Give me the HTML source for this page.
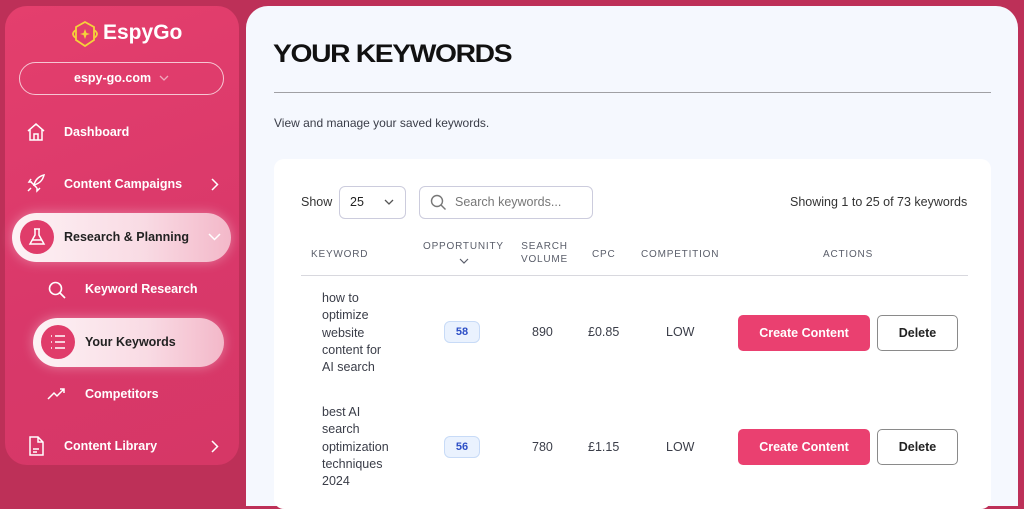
<!DOCTYPE html>
<html><head><meta charset="utf-8"><style>
*{box-sizing:border-box;margin:0;padding:0}
body{width:1024px;height:488px;overflow:hidden;background:#bd3058;font-family:"Liberation Sans",sans-serif;position:relative}
.a{position:absolute}
#side{left:5px;top:6px;width:234px;height:459px;border-radius:22px;background:linear-gradient(160deg,#e43f6d,#d9386a 60%,#d63766)}
.nav{color:#fff;font-size:12.5px;font-weight:bold;white-space:nowrap}
.pill{background:linear-gradient(90deg,#fdf2f5,#f9dbe4 60%,#f3b8c9);border-radius:25px;box-shadow:0 0 12px rgba(255,255,255,.35)}
.circ{border-radius:50%;background:#e03c6a;}
#main{left:246px;top:6px;width:772px;height:500px;border-radius:22px 22px 0 0;background:#f5f8fe}
#card{left:274px;top:159px;width:717px;height:350px;background:#fff;border-radius:10px}
.th{font-size:10px;color:#5a5e6a;letter-spacing:.8px;text-align:center;line-height:13px}
.td{font-size:12.5px;color:#3a3d48}
.badge{width:36px;height:22px;border:1px solid #c8dbf7;background:#eaf2fe;border-radius:6px;color:#2d4fc6;font-size:11px;font-weight:bold;text-align:center;line-height:20px}
.cc{width:132px;height:36px;background:#ea4070;border-radius:5px;color:#fff;font-size:12.5px;font-weight:bold;text-align:center;line-height:36px}
.del{width:81px;height:36px;border:1px solid #8a8a8a;background:#fff;border-radius:5px;color:#222;font-size:12.5px;font-weight:bold;text-align:center;line-height:34px}
</style></head><body>
<div id="side" class="a"></div>
<svg class="a" style="left:70px;top:20px" width="30" height="28" viewBox="0 0 30 28" fill="none" stroke="#f5d23a" stroke-width="1.8"><path d="M15 2 L24 7 L24 20 L15 26 L6 20 L6 7 Z"/><path d="M6 10 Q0 14 6 18 M24 10 Q30 14 24 18"/><path d="M15 9 L16.5 13 L20 14 L16.5 15 L15 19 L13.5 15 L10 14 L13.5 13 Z" fill="#f5d23a" stroke="none"/></svg>
<div class="a" style="left:103px;top:21px;color:#fff;font-size:21px;font-weight:bold">EspyGo</div>
<div class="a" style="left:19px;top:62px;width:205px;height:33px;border:1.5px solid #f6c6d3;border-radius:17px"></div>
<div class="a nav" style="left:74px;top:71px">espy-go.com</div>
<svg class="a" style="left:159px;top:75px" width="10" height="7" viewBox="0 0 10 7" fill="none" stroke="#f0a9bd" stroke-width="1.3"><path d="M1 1 L5 5 L9 1"/></svg>
<svg class="a" style="left:26px;top:122px" width="20" height="20" viewBox="0 0 20 20" fill="none" stroke="#fff" stroke-width="1.5"><path d="M2 9 L10 2 L18 9 M4 7.5 V18 H16 V7.5 M8 18 V12 H12 V18"/></svg>
<div class="a nav" style="left:64px;top:125px">Dashboard</div>
<svg class="a" style="left:26px;top:173px" width="20" height="20" viewBox="0 0 20 20" fill="none" stroke="#fff" stroke-width="1.5"><path d="M8 12 Q10 4 18 2 Q16 10 8 12 Z M8 12 L5 9 M8 12 L11 15 M5 15 L2 18 M6 9 L3 9 L5 6 M11 15 L11 18 L14 15"/></svg>
<div class="a nav" style="left:64px;top:177px">Content Campaigns</div>
<svg class="a" style="left:211px;top:178px" width="8" height="13" viewBox="0 0 8 13" fill="none" stroke="#fff" stroke-width="1.5"><path d="M1 1 L6.5 6.5 L1 12"/></svg>
<div class="a pill" style="left:12px;top:213px;width:219px;height:49px"></div>
<div class="a circ" style="left:20px;top:220px;width:34px;height:34px"></div>
<svg class="a" style="left:27px;top:227px" width="20" height="20" viewBox="0 0 20 20" fill="none" stroke="#fff" stroke-width="1.5"><path d="M7 2 H13 M8 2 V8 L3 17 H17 L12 8 V2 M5 13 H15"/></svg>
<div class="a nav" style="left:64px;top:230px;color:#222">Research &amp; Planning</div>
<svg class="a" style="left:208px;top:233px" width="13" height="8" viewBox="0 0 13 8" fill="none" stroke="#fff" stroke-width="1.5"><path d="M1 1 L6.5 6.5 L12 1"/></svg>
<svg class="a" style="left:47px;top:280px" width="20" height="20" viewBox="0 0 20 20" fill="none" stroke="#fff" stroke-width="1.6"><circle cx="8.5" cy="8.5" r="6"/><path d="M13 13 L18 18"/></svg>
<div class="a nav" style="left:85px;top:282px">Keyword Research</div>
<div class="a pill" style="left:33px;top:318px;width:191px;height:49px"></div>
<div class="a circ" style="left:41px;top:325px;width:34px;height:34px"></div>
<svg class="a" style="left:48px;top:333px" width="20" height="18" viewBox="0 0 20 18" fill="none" stroke="#fff" stroke-width="1.5"><path d="M3 3 h1 M3 9 h1 M3 15 h1 M7 3 H17 M7 9 H17 M7 15 H17"/></svg>
<div class="a nav" style="left:85px;top:335px;color:#222">Your Keywords</div>
<svg class="a" style="left:47px;top:386px" width="20" height="16" viewBox="0 0 20 16" fill="none" stroke="#fff" stroke-width="1.5"><path d="M1 13 L7 7 L10 10 L17 3 M13 3 H17 V7"/></svg>
<div class="a nav" style="left:85px;top:387px">Competitors</div>
<svg class="a" style="left:27px;top:436px" width="18" height="20" viewBox="0 0 18 20" fill="none" stroke="#fff" stroke-width="1.5"><path d="M3 1 H11 L16 6 V19 H3 Z M11 1 V6 H16 M6 13 H12 M6 16 H10"/></svg>
<div class="a nav" style="left:64px;top:439px">Content Library</div>
<svg class="a" style="left:211px;top:440px" width="8" height="13" viewBox="0 0 8 13" fill="none" stroke="#fff" stroke-width="1.5"><path d="M1 1 L6.5 6.5 L1 12"/></svg>

<div id="main" class="a"></div>
<div class="a" style="left:273px;top:40px;font-size:25px;font-weight:900;color:#111;letter-spacing:-1.2px;transform:scaleX(1.13);transform-origin:left;white-space:nowrap">YOUR KEYWORDS</div>
<div class="a" style="left:274px;top:92px;width:717px;height:1px;background:#a0a0a4"></div>
<div class="a" style="left:274px;top:116px;font-size:12px;color:#3a3d48">View and manage your saved keywords.</div>
<div id="card" class="a"></div>
<div class="a td" style="left:301px;top:195px;color:#333">Show</div>
<div class="a" style="left:339px;top:186px;width:67px;height:33px;border:1px solid #ccd;border-radius:6px;background:#fff"></div>
<div class="a td" style="left:350px;top:195px;color:#222">25</div>
<svg class="a" style="left:384px;top:199px" width="10" height="7" viewBox="0 0 10 7" fill="none" stroke="#555" stroke-width="1.3"><path d="M1 1 L5 5 L9 1"/></svg>
<div class="a" style="left:419px;top:186px;width:174px;height:33px;border:1px solid #ccd;border-radius:6px;background:#fff"></div>
<svg class="a" style="left:430px;top:194px" width="17" height="17" viewBox="0 0 17 17" fill="none" stroke="#777" stroke-width="1.4"><circle cx="7" cy="7" r="5.5"/><path d="M11 11 L15.5 15.5"/></svg>
<div class="a td" style="left:455px;top:195px;color:#777">Search keywords...</div>
<div class="a td" style="left:790px;top:195px;color:#333">Showing 1 to 25 of 73 keywords</div>
<div class="a th" style="left:311px;top:248px">KEYWORD</div>
<div class="a th" style="left:423px;top:240px">OPPORTUNITY</div>
<svg class="a" style="left:459px;top:258px" width="10" height="6" viewBox="0 0 10 6" fill="none" stroke="#5a5e6a" stroke-width="1.2"><path d="M1 1 L5 5 L9 1"/></svg>
<div class="a th" style="left:521px;top:240px">SEARCH<br>VOLUME</div>
<div class="a th" style="left:592px;top:248px">CPC</div>
<div class="a th" style="left:641px;top:248px">COMPETITION</div>
<div class="a th" style="left:823px;top:248px">ACTIONS</div>
<div class="a" style="left:301px;top:275px;width:667px;height:1px;background:#d8d8de"></div>
<div class="a td" style="left:322px;top:290px;line-height:17.3px">how to<br>optimize<br>website<br>content for<br>AI search</div>
<div class="a badge" style="left:444px;top:321px">58</div>
<div class="a td" style="left:532px;top:325px">890</div>
<div class="a td" style="left:588px;top:325px">£0.85</div>
<div class="a td" style="left:666px;top:325px">LOW</div>
<div class="a cc" style="left:738px;top:315px">Create Content</div>
<div class="a del" style="left:877px;top:315px">Delete</div>
<div class="a td" style="left:322px;top:404px;line-height:17.3px">best AI<br>search<br>optimization<br>techniques<br>2024</div>
<div class="a badge" style="left:444px;top:436px">56</div>
<div class="a td" style="left:532px;top:440px">780</div>
<div class="a td" style="left:588px;top:440px">£1.15</div>
<div class="a td" style="left:666px;top:440px">LOW</div>
<div class="a cc" style="left:738px;top:429px">Create Content</div>
<div class="a del" style="left:877px;top:429px">Delete</div>
</body></html>
